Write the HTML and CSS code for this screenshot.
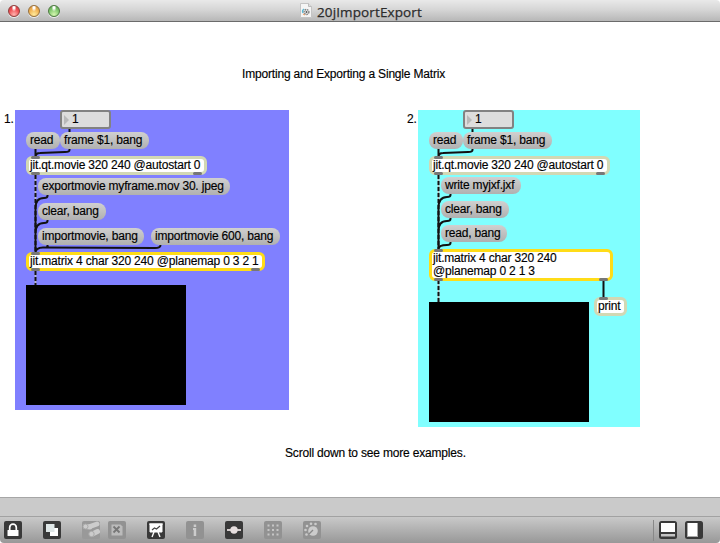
FILE: index.html
```html
<!DOCTYPE html>
<html lang="en">
<head>
<meta charset="utf-8">
<title>20jImportExport</title>
<link rel="stylesheet" href="styles.css">
</head>
<body>
<div class="window">
  <header class="titlebar">
    <div class="lights"><i class="light red"></i><i class="light amber"></i><i class="light green"></i></div>
    <div class="title">
      <svg width="12" height="15" viewBox="0 0 12 15"><path d="M.5.5h8l3 3v11H.5z" fill="#f5f5f5" stroke="#c4c4c4"/><path d="M8.500.5v3h3" fill="#ddd" stroke="#bbb"/><circle cx="6.500" cy="9" r="2.400" fill="none" stroke="#888" stroke-width="1.500" stroke-dasharray="1.500 .6"/><path d="M3 10a3 3 0 0 1 1-4" fill="none" stroke="#5ab8d4" stroke-width="1.200"/><path d="M3 11l2 1" stroke="#eb9a5c"/><circle cx="6.500" cy="9" r="1" fill="#555"/></svg>
      <span>20jImportExport</span>
    </div>
  </header>
  <main class="canvas">
    <div class="label heading">Importing and Exporting a Single Matrix</div>
    <div class="label one">1.</div>
    <div class="label two">2.</div>
    <div class="label footer-note">Scroll down to see more examples.</div>

    <section class="panel first">
      <svg class="cords" width="274" height="300">
        <path class="cord" d="M54.500 18V24M54.500 38V40Q54.500 42 50 42L25 43Q20.500 43 20.500 47M20.500 38V47"/>
        <path class="dash-base" d="M20.500 65V144M20.500 161V175"/>
        <path class="dash" d="M20.500 65V144M20.500 161V175"/>
        <path class="cord" d="M32.500 84V86Q32.500 88 29 88Q20.500 88 20.500 98V143M32.500 109V111Q32.500 113 29 113Q20.500 113 20.500 123M32.500 134V137M145.500 134V135Q145.500 138 140 138L28 137.500Q20.500 137.500 20.500 143"/>
      </svg>
      <div class="number n1"><i></i>1</div>
      <div class="msg read"><span>read</span></div>
      <div class="msg frame"><span>frame $1, bang</span></div>
      <div class="obj movie"><span>jit.qt.movie 320 240 @autostart 0</span><i class="port in"></i><i class="port out"></i><i class="port out end"></i></div>
      <div class="msg export"><span>exportmovie myframe.mov 30. jpeg</span></div>
      <div class="msg clear1"><span>clear, bang</span></div>
      <div class="msg import"><span>importmovie, bang</span></div>
      <div class="msg import600"><span>importmovie 600, bang</span></div>
      <div class="obj matrix1 yellow"><span>jit.matrix 4 char 320 240 @planemap 0 3 2 1</span><i class="port in"></i><i class="port out"></i><i class="port out end"></i></div>
      <div class="screen s1"></div>
    </section>

    <section class="panel second">
      <svg class="cords" width="222" height="317">
        <path class="cord" d="M54.500 18V24M54.500 38V40Q54.500 42 50 42L25 43Q20.500 43 20.500 47M20.500 38V47"/>
        <path class="dash-base" d="M20.500 65V141M20.500 170V192"/>
        <path class="dash" d="M20.500 65V141M20.500 170V192"/>
        <path class="cord" d="M32.500 83V85Q32.500 87 29 87Q20.500 87 20.500 98V140M32.500 107V109Q32.500 111 29 111Q20.500 111 20.500 121M32.500 131V133Q32.500 135 29 135Q20.500 135 20.500 139M185.500 170V188"/>
      </svg>
      <div class="number n1"><i></i>1</div>
      <div class="msg read"><span>read</span></div>
      <div class="msg frame"><span>frame $1, bang</span></div>
      <div class="obj movie"><span>jit.qt.movie 320 240 @autostart 0</span><i class="port in"></i><i class="port out"></i><i class="port out end"></i></div>
      <div class="msg write"><span>write myjxf.jxf</span></div>
      <div class="msg clear2"><span>clear, bang</span></div>
      <div class="msg readbang"><span>read, bang</span></div>
      <div class="obj matrix2 yellow"><span>jit.matrix 4 char 320 240<br>@planemap 0 2 1 3</span><i class="port in"></i><i class="port out"></i><i class="port out end"></i></div>
      <div class="obj print"><span>print</span><i class="port in"></i></div>
      <div class="screen s2"></div>
    </section>
  </main>
  <div class="strip"></div>
  <footer class="toolbar">
    <svg class="tool" viewBox="0 0 18 18"><rect width="18" height="18" rx="2" fill="#393939"/><path d="M5.700 9V6.500a3.300 3.300 0 0 1 6.600 0V9" fill="none" stroke="#fff" stroke-width="1.700"/><rect x="3.500" y="9" width="11" height="6" rx=".5" fill="#fff"/></svg>
    <svg class="tool patch" viewBox="0 0 18 18"><rect width="18" height="18" rx="2" fill="#393939"/><path d="M7 7h8v8H7z" fill="#fff"/><path d="M3 3h8.500v8H3z" fill="#dfe7e7"/></svg>
    <svg class="tool find" viewBox="0 0 18 18"><rect width="18" height="18" rx="2" fill="#999"/><g stroke="#ccc" stroke-width="5" stroke-linecap="round"><path d="M3.500 5.500L8 6M8 5.500l7-2.500M10.500 13l5-2.500"/></g><g fill="#ccc" stroke="#aaa"><circle cx="3.500" cy="5.500" r="2.500"/><circle cx="9.500" cy="13" r="2.700"/></g></svg>
    <svg class="tool close" viewBox="0 0 18 18"><rect width="18" height="18" rx="2" fill="#929292"/><path d="M3.500 3.500h9l2 2v9h-11z" fill="#bbb"/><path d="M5.500 5.500l6 6m0-6l-6 6" stroke="#777" stroke-width="1.800"/></svg>
    <svg class="tool present" viewBox="0 0 18 18"><rect width="18" height="18" rx="2" fill="#393939"/><path d="M2 3h14M3 3h12v8H3z" fill="#fff" stroke="#fff"/><path d="M5 9l2.500-2 2 1L13 5" fill="none" stroke="#444" stroke-width="1.200"/><path d="M7 11l-2 5M11 11l2 5" stroke="#fff" stroke-width="1.400"/></svg>
    <svg class="tool info" viewBox="0 0 18 18"><rect width="18" height="18" rx="2" fill="#929292"/><path d="M7.700 3.500h2.500V6H7.700zM7 7h3.200v8H7.700V9H7z" fill="#ccc"/></svg>
    <svg class="tool node" viewBox="0 0 18 18"><rect width="18" height="18" rx="2" fill="#393939"/><path d="M2 9h14" stroke="#e6dede" stroke-width="1.800"/><circle cx="9" cy="9" r="3.700" fill="#e6dede"/></svg>
    <svg class="tool grid" viewBox="0 0 18 18"><rect width="18" height="18" rx="2" fill="#929292"/><path d="M3.500 4.500h12M3.500 9h12M3.500 13.500h12" stroke="#c6c6c6" stroke-width="2" stroke-dasharray="2 2.500"/></svg>
    <svg class="tool dial" viewBox="0 0 18 18"><rect width="18" height="18" rx="2" fill="#929292"/><circle cx="10" cy="10" r="4.800" fill="#ccc"/><path d="M10 9l-4 4" stroke="#888" stroke-width="1.300"/><g fill="#ccc"><circle cx="3.500" cy="13.500" r="1.300"/><circle cx="2.500" cy="9" r="1.300"/><circle cx="4" cy="5" r="1.300"/><circle cx="8" cy="2.700" r="1.300"/><circle cx="12.500" cy="3" r="1.300"/></g></svg>
    <i class="divider"></i>
    <svg class="tool bottom" viewBox="0 0 18 18"><rect width="18" height="18" rx="2.500" fill="#393939"/><path d="M2 2h14v9H2z" fill="#fff"/><path d="M2 13h14v2.500H2z" fill="#c4c4c4"/></svg>
    <svg class="tool side" viewBox="0 0 18 18"><rect width="18" height="18" rx="2.500" fill="#393939"/><path d="M2 2h11v14H2z" fill="#aaa"/><path d="M3 2h9v13H3z" fill="#fff"/></svg>
  </footer>
</div>
</body>
</html>
```
FILE: styles.css
```css
* { box-sizing: border-box; }
body { margin: 0; background: #fff; font: 12px/14px "Liberation Sans", Arial, sans-serif; color: #000; overflow: hidden; }
.window { width: 720px; height: 543px; display: flex; flex-direction: column; }
.titlebar { height: 22px; flex: none; display: grid; grid-template-columns: 300px 1fr; align-items: center; background: linear-gradient(#e9e9e9, #d6d6d6 45%, #b7b7b7); border-bottom: 1px solid #6b6b6b; border-radius: 4px 4px 0 0; }
.lights { display: flex; gap: 8px; padding-left: 8px; }
.light { width: 12px; height: 12px; border-radius: 50%; box-shadow: 0 1px 0 #eee; }
.red { border: 1px solid #8f3e3c; background: radial-gradient(ellipse at 50% 15%, #fff 0 10%, transparent 35%), radial-gradient(circle at 50% 85%, #ffb5b0, #ef5054 55%, #c4383c); }
.amber { border: 1px solid #96703c; background: radial-gradient(ellipse at 50% 15%, #fff 0 10%, transparent 35%), radial-gradient(circle at 50% 85%, #ffeb9c, #f1b253 55%, #ce8739); }
.green { border: 1px solid #4d7940; background: radial-gradient(ellipse at 50% 15%, #fff 0 10%, transparent 35%), radial-gradient(circle at 50% 85%, #d5f7b0, #83c96f 55%, #54974b); }
.title { display: flex; align-items: center; gap: 5px; font: 13.5px/18px "Open Sans", sans-serif; color: #2c2c2c; }
.title span { position: relative; top: 1px; letter-spacing: .12px; -webkit-text-stroke: .25px #2c2c2c; }
.canvas { flex: 1; position: relative; background: #fff; letter-spacing: -.18px; -webkit-text-stroke: .15px #000; }
.label { position: absolute; white-space: nowrap; }
.heading { left: 242px; top: 45px; }
.one { left: 4px; top: 90px; }
.two { left: 407px; top: 90px; }
.footer-note { left: 285px; top: 424px; }
.panel { position: absolute; top: 88px; }
.first { left: 15px; width: 274px; height: 300px; background: #8080ff; }
.second { left: 418px; width: 222px; height: 317px; background: #80ffff; }
.cords { position: absolute; left: 0; top: 0; }
.cord { fill: none; stroke: #111; stroke-width: 2; }
.dash-base { stroke: #bbb; stroke-width: 1.5; }
.dash { stroke: #111; stroke-width: 2; stroke-dasharray: 4 2; }
.msg, .obj, .number, .screen { position: absolute; white-space: nowrap; }
.msg { height: 17px; border-radius: 8px; padding: 1px 0 0 4px; background: linear-gradient(#d0d0d0, #b0b0b0); }
.obj { height: 19px; border: 3px solid #d2d8b4; border-radius: 6px; background: #fff; padding-left: 1px; line-height: 12px; }
.yellow { border-color: #ffdc18; }
.number { left: 45px; top: 0; width: 51px; height: 19px; border: 2px solid #828282; border-radius: 3px; background: #ddd; padding-left: 10px; line-height: 15px; }
.number i { position: absolute; left: 2px; top: 3px; border-left: 5px solid #b9b9b9; border-top: 5px solid transparent; border-bottom: 5px solid transparent; }
.port { position: absolute; width: 9px; height: 3px; border-radius: 2px; background: #777; left: 2px; }
.in { top: -3px; }
.out { bottom: -3px; }
.end { left: auto; right: 2px; }
.read { left: 11px; top: 22px; width: 34px; }
.frame { left: 45px; top: 22px; width: 89px; }
.movie { left: 11px; top: 46px; width: 181px; }
.export { left: 23px; top: 68px; width: 192px; }
.clear1 { left: 23px; top: 93px; width: 68px; }
.import { left: 23px; top: 118px; width: 106px; }
.import600 { left: 136px; top: 118px; width: 129px; }
.matrix1 { left: 11px; top: 142px; width: 239px; }
.write { left: 23px; top: 67px; width: 80px; }
.clear2 { left: 23px; top: 91px; width: 68px; }
.readbang { left: 23px; top: 115px; width: 66px; }
.matrix2 { left: 11px; top: 139px; width: 184px; height: 32px; line-height: 13px; }
.print { left: 176px; top: 187px; width: 33px; }
.screen { width: 160px; height: 120px; left: 11px; background: #000; }
.s1 { top: 175px; }
.s2 { top: 192px; }
.strip { height: 19px; flex: none; background: #cacaca; border-top: 1px solid #a6a6a6; }
.toolbar { height: 27px; flex: none; display: flex; align-items: center; padding-left: 4px; border-top: 1px solid #a2a2a2; border-radius: 0 0 4px 4px; background: linear-gradient(#c9c9c9, #989898); }
.tool { width: 18px; height: 18px; flex: none; }
.patch, .present, .info, .node, .grid, .dial, .find { margin-left: 21px; }
.close { margin-left: 8px; }
.divider { width: 1px; height: 21px; margin-left: auto; background: #888; }
.bottom { margin-left: 5px; }
.side { margin: 0 17px 0 8px; }
```
